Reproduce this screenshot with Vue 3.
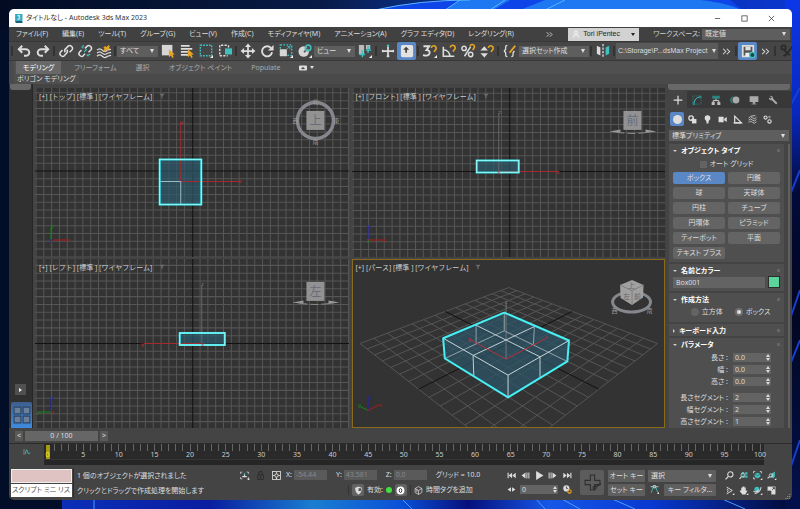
<script setup>
import { ref, h } from "vue";

const T = "#3fc1c0"; // teal accent
const Y = "#e9a522"; // orange accent

const icons = {
  logo: `<rect x="2" y="0" width="13" height="12" fill="#2fa9c4"/><path d="M2 12h13v4H4l-2-2z" fill="#17627a"/><path d="M6 3h4.500l-2 2.500q2.500 0 2.200 2.300q-1 2.600-4.700 1.200" stroke="#fff" stroke-width="1.700" fill="none"/>`,
  undo: `<path d="M6 2L2 6l4 4M2.500 6H10a4 3.700 0 010 7.500H8" stroke-width="2.200"/>`,
  redo: `<path d="M10 2l4 4l-4 4M13.500 6H6a4 3.700 0 000 7.500h2" stroke-width="2.200"/>`,
  link: `<path d="M7 9.500Q5.500 7 8 5l2.500-2.500q2-1.500 4 .3t.2 4L12 9.500M9 6.500q1.500 2.500-.6 4.300L6 13.500q-2 1.500-4-.3t-.2-4L4 7" stroke-width="1.700"/>`,
  unlink: `<path d="M8 5l2.500-2.500q2-1.500 4 .3t.2 4L12 9.500M8 11l-2 2.500q-2 1.500-4-.3t-.2-4L4 7" stroke-width="1.700"/><path d="M4 3l2 2M12 14l-2-2M7 9l3-3M6 1v2M14 12h-2" stroke="${T}" stroke-width="1.500"/>`,
  bind: `<path d="M0 7q3-3 6 0t6 0l4-1M0 10.500q3-3 6 0t6 0l4-1M0 14q3-3 6 0t6 0l4-1" stroke-width="1.400"/><path d="M8 8l6-6M8 5l2-2M11 7l3-3" stroke="${Y}" stroke-width="2.200"/>`,
  selObj: `<rect x="1" y="1" width="12" height="12" fill="#d6d6d6" stroke="none"/><path d="M9 6l7 6h-3l1.500 3l-1.500 1l-1.700-3L9 15z" fill="${Y}" stroke="none"/>`,
  selName: `<path d="M1 2h10M1 5.500h13M1 9h8M1 12.500h9" stroke-width="2"/><path d="M9 6l7 6h-3l1.500 3l-1.500 1l-1.700-3L9 15z" fill="${Y}" stroke="none"/>`,
  region: `<rect x="1.500" y="1.500" width="13" height="12" stroke="${T}" stroke-width="1.600" stroke-dasharray="2 1.300"/><path d="M16 12.500V16h-3.500z" fill="#eee" stroke="none"/>`,
  crossing: `<path d="M10 1.500H2v12h9M12 1.500V4" stroke-width="1.600" stroke-dasharray="2.500 1.500"/><rect x="8" y="5" width="8" height="7" fill="${T}" stroke="none"/>`,
  move: `<path d="M8 2v12M2 8h12" stroke-width="2"/><path d="M8-.500l3.500 4h-7zM8 16.500l3.500-4h-7zM-.500 8l4-3.500v7zM16.500 8l-4-3.500v7z" fill="#ddd" stroke="none"/>`,
  rotate: `<path d="M12.500 4.500a5.800 5.800 0 101.300 5" stroke-width="2.200"/><path d="M15.500 1v6.500H9z" fill="#ddd" stroke="none"/>`,
  scale: `<rect x="1.500" y="1" width="13" height="12" stroke="${T}" stroke-width="1.600" stroke-dasharray="2 1.500"/><rect x="1" y="6" width="8" height="8" fill="#d6d6d6" stroke="none"/><path d="M9 6l3-3M9.500 3h3v3" stroke="${T}"/><path d="M16 12.500V16h-3.500z" fill="#eee" stroke="none"/>`,
  place: `<circle cx="6.500" cy="8.500" r="6" fill="#d6d6d6" stroke="none"/><path d="M7 9.500l4-5" stroke="#555" stroke-width="2"/><circle cx="11.500" cy="4.500" r="3.200" stroke="${T}" stroke-width="1.800"/><path d="M16 12.500V16h-3.500z" fill="#eee" stroke="none"/>`,
  pivot: `<path d="M1 1h6v11H1zM9 1h5v5H9z" fill="#bbb" stroke="none"/><path d="M5 7v8M2 12h6M11.500 2v8M9 7h6" stroke="${T}" stroke-width="1.700"/><path d="M16 12.500V16h-3.500z" fill="#eee" stroke="none"/>`,
  manip: `<path d="M8 1v14M1 8h14" stroke-width="2"/><path d="M6.500 14h3M2 6.500v3M14 6.500v3" stroke-width="1.500"/><circle cx="8" cy="2" r="1.500" fill="${T}" stroke="none"/>`,
  keyb: `<rect x="1" y="1" width="14" height="14" rx="2" fill="#e3e3e3" stroke="none"/><path d="M7 3L10.500 6.500H8V10H6V6.500H3.500z" fill="#444" stroke="none"/>`,
  snap3: `<path d="M.500 2.500H7L4 7q4 0 3.500 3.500Q6.500 14.500 0 12.700" stroke-width="2.200"/><path d="M9.500 4.500a2.800 2.800 0 115 2L12.500 9" stroke="${Y}" stroke-width="1.800"/><path d="M16 12.500V16h-3.500z" fill="#eee" stroke="none"/>`,
  angle: `<path d="M1.500 3v11H14M2 6.500a8 8 0 017 7.500" stroke-width="1.800"/><path d="M9.500 4a2.800 2.800 0 115 2L12.500 8.500" stroke="${Y}" stroke-width="1.800"/>`,
  percent: `<circle cx="3.500" cy="5" r="2.500" stroke-width="1.700"/><circle cx="11" cy="12" r="2.500" stroke-width="1.700"/><path d="M11 3L4 14" stroke-width="1.700"/><path d="M10.500 2.500a2.500 2.500 0 114 2.500L13.500 7" stroke="${Y}" stroke-width="1.800"/>`,
  spin: `<path d="M5 2.500l4 5H.500zM5 15.500l4-5H.500z" fill="#ddd" stroke="none"/><path d="M9.500 4.500a2.800 2.800 0 115 2L12.500 9" stroke="${Y}" stroke-width="1.800"/>`,
  braces: `<path d="M5 1.500q-2 0-2 2V6L1.500 8L3 10v2.500q0 2 2 2M9.500 14.500q2 0 2-2V10L13 8" stroke-width="1.500"/><path d="M7.500 10L14 2" stroke="${Y}" stroke-width="2.200"/>`,
  mirror: `<path d="M1 2l4 2v9l-4-2z" fill="#ddd" stroke="none"/><path d="M15 2l-4 2v9l4-2z" fill="${T}" stroke="none"/><path d="M8 0v16" stroke-dasharray="2.500 1.500" stroke-width="1.500"/>`,
  more: `<path d="M3 4l4 4l-4 4M8.500 4l4 4l-4 4" stroke-width="1.500"/>`,
  save: `<path d="M2 2h12v12H2z" fill="#555" stroke="#ddd" stroke-width="2"/><path d="M5 3h6v4H5z" fill="#ddd" stroke="none"/><path d="M5 10h5v4H5z" fill="#eee" stroke="none"/><circle cx="13" cy="12.500" r="3" fill="#17474a" stroke="${T}" stroke-width="1.500"/>`,
  tools: `<g stroke="#292929" stroke-width="2"><path d="M15 2L7 12l-3 2"/><circle cx="4" cy="4" r="2.500"/><path d="M5 7l6 6"/></g>`,
  user: `<circle cx="8" cy="5" r="3.200" stroke="#fff" stroke-width="1.500"/><path d="M2.500 15q0-5.500 5.500-5.500t5.500 5.500" stroke="#fff" stroke-width="1.500"/>`,
  badge: `<rect y="3" width="16" height="10" rx="2" fill="#ddd" stroke="none"/><path d="M5 9.500l3-3l3 3z" fill="#333" stroke="#333"/>`,
  plus: `<path d="M8 1v14M1 8h14" stroke-width="2"/>`,
  modify: `<rect x="1.500" y="1.500" width="13" height="13" stroke="#2b8583" stroke-dasharray="3 1.500"/><path d="M3 14Q4 4 13 3" stroke="${T}" stroke-width="1.600"/><path d="M1 12h4v4H1zM11 1h4v4h-4z" fill="#2b8583" stroke="none"/>`,
  hierarchy: `<path d="M2 1h12v5H2z" fill="#2b8583" stroke="none"/><path d="M8 6v3M3.500 12V9h9v3" stroke-width="1.500"/><path d="M1 11h5v5H1zM10 11h5v5h-5z" fill="#bbb" stroke="none"/>`,
  motion: `<circle cx="9.500" cy="8" r="5.500" fill="#aaa" stroke="none"/><path d="M5 2.500a6 6 0 000 11M2.500 4a6 6 0 000 8" stroke="#2b8583" stroke-width="1.500"/>`,
  display: `<path d="M1 2h14v9H1zM6 11h4v3H6z" fill="#aaa" stroke="none"/><path d="M4 14.500h8" stroke="#aaa"/>`,
  wrench: `<path d="M6 6l8 8" stroke="#aaa" stroke-width="3"/><path d="M3 1.500L6 4L4 6L1.500 3.500q-.500 3 1.500 4.500t5-1q1-3-1-4.500T3 1.500z" fill="#aaa" stroke="none"/>`,
  sphere: `<circle cx="8" cy="8" r="6.500" fill="#dedede" stroke="none"/>`,
  shapes: `<circle cx="5.500" cy="5.500" r="4" stroke-width="2.200"/><rect x="7" y="7" width="8" height="8" fill="#ddd" stroke="none"/><path d="M5 10l5-5" stroke-width="2.500"/>`,
  light: `<circle cx="8" cy="5.500" r="5" fill="#ddd" stroke="none"/><path d="M5.500 9h5L9.500 15h-3z" fill="#ddd" stroke="none"/>`,
  camera: `<path d="M1 3h9v10H1zM11 6.500l4.500-3v9L11 9.500z" fill="#ddd" stroke="none"/>`,
  helper: `<path d="M3 2v12h12z" stroke-width="2.200"/><path d="M1 14h14" stroke-width="2"/>`,
  waves: `<path d="M1 5q4-4 7 0t7-1M1 9q4-4 7 0t7-1M1 13q4-4 7 0t7-1M5 2l8-1" stroke-width="1.400"/>`,
  gears: `<circle cx="4.500" cy="4.500" r="2.800" stroke-width="2"/><circle cx="11.500" cy="11.500" r="3" stroke-width="2"/><circle cx="11.500" cy="3.500" r="1.500"/>`,
  play: `<path d="M2 0l13 8L2 16z" fill="#ddd" stroke="none"/>`,
  first: `<path d="M2 3v10" stroke-width="2"/><path d="M9 3v10L3 8zM15.500 3v10L9.500 8z" fill="#ddd" stroke="none"/>`,
  last: `<path d="M14 3v10" stroke-width="2"/><path d="M7 3v10l6-5zM.500 3v10l6-5z" fill="#ddd" stroke="none"/>`,
  prev: `<path d="M8 2.500v11L1 8z" fill="#ddd" stroke="none"/><path d="M10.500 2.500v11M14 2.500v11" stroke-width="1.800"/>`,
  next: `<path d="M8 2.500v11L15 8z" fill="#ddd" stroke="none"/><path d="M5.500 2.500v11M2 2.500v11" stroke-width="1.800"/>`,
  keyMode: `<path d="M7 4v8L1 8zM9 4v8l6-4z" fill="#ddd" stroke="none"/>`,
  clock: `<circle cx="6" cy="6" r="5.500" fill="#ddd" stroke="none"/><path d="M6 2.500V6h3" stroke="#444" stroke-width="1.500"/><circle cx="11.500" cy="11.500" r="3" stroke="${Y}" stroke-width="2"/>`,
  bigKey: `<path d="M6 1h4v5h5v4h-5v5H6v-5H1V6h5z" stroke="#2f2f2f" stroke-width="1"/><circle cx="10" cy="13" r="1.500" stroke="#2f2f2f"/><path d="M11 12l5-3" stroke="#2f2f2f" stroke-width="1.500"/>`,
  curve: `<path d="M2 14L6 3h4l4 11" stroke="${T}" stroke-width="1.500"/><path d="M1 3h4M11 3h4M6 1h4v4H6z" stroke-width="1.500"/><path d="M16 12.500V16h-3.500z" fill="#eee" stroke="none"/>`,
  track: `<path d="M2 2v12" stroke="#bbb"/><path d="M5 12q2-14 4-5t5 2" stroke="${T}" stroke-width="1.700"/>`,
  isolate: `<path d="M1 5V2h3M12 2h3v3M15 11v3h-2M4 14H1v-3" stroke-width="1.300"/><path d="M4 11h8V9H9V7H7v2H4z" fill="#ddd" stroke="none"/><circle cx="8" cy="5.500" r="1.600" fill="${T}" stroke="none"/><path d="M16.500 12.500V16H13z" fill="#eee" stroke="none"/>`,
  lock: `<path d="M3 7h10v8H3z" stroke="#292929" stroke-width="1.500"/><path d="M5 7V4q0-3 3-3t3 3v3M8 9v4" stroke="#292929" stroke-width="1.800"/>`,
  absolute: `<rect x="1" y="1" width="14" height="14" stroke-width="1.500"/><circle cx="8" cy="8" r="3" stroke-width="1.700"/><path d="M8 2v3M8 11v3M2 8h3M11 8h3" stroke-width="2"/>`,
  shield: `<path d="M8 1q3 2 6 2q0 9-6 12Q2 12 2 3q3 0 6-2z" fill="#ddd" stroke="none"/><path d="M8 4v5h4q1-2 1-5z" fill="#555" stroke="none"/>`,
  zero: `<circle cx="8" cy="8" r="7" fill="#fff" stroke="none"/><ellipse cx="8" cy="8" rx="2.200" ry="3.500" stroke="#333" stroke-width="1.700"/>`,
  cube: `<path d="M8 1l6 3.500v7L8 15l-6-3.500v-7zM2 4.500L8 8l6-3.500M8 8v7M5 6v5" stroke-width="1.300"/>`,
  zoom: `<circle cx="9.500" cy="6" r="4.700" stroke-width="1.800"/><path d="M6 9.500L1 15" stroke-width="2.200"/>`,
  zoomAll: `<path d="M5 2h4v4H5zM11 2h4v4h-4zM11 8h4v4h-4zM6 8h4v4H6z" fill="${T}" stroke="none"/><circle cx="7" cy="7" r="3.500" stroke-width="1.300"/><path d="M4.500 10L1 14" stroke-width="2"/>`,
  extents: `<path d="M1 4V1h3M12 1h3v3M4 14H1v-3" stroke-width="1.500"/><path d="M8 3l5 2.500v5L8 13l-5-2.500v-5z" fill="${T}" stroke="none"/><path d="M3.500 6L8 8l4.500-2" stroke="#235c5c"/><path d="M16.500 12.500V16H13z" fill="#eee" stroke="none"/>`,
  extAll: `<path d="M9 4l5-3v9l-3 3l-5-3z" fill="${T}" stroke="none"/><circle cx="7" cy="8" r="3" stroke-width="1.500"/><path d="M5 10l-4 3" stroke-width="2"/><path d="M16.500 12.500V16H13z" fill="#eee" stroke="none"/>`,
  fov: `<path d="M3 2l10 6L3 14M4 5q3 3 0 6" stroke-width="1.700"/><path d="M16.500 12.500V16H13z" fill="#eee" stroke="none"/>`,
  hand: `<path d="M4 8V3h1.800v4V1.500h2V7V1h2v6l.200-4.500h2V9l2-1.500l.800 1L11.500 15H6L1 9l1.500-1z" fill="#ddd" stroke="none"/><path d="M16.500 12.500V16H13z" fill="#eee" stroke="none"/>`,
  orbit: `<circle cx="7" cy="6" r="4.500" fill="${T}" stroke="none"/><path d="M3 14Q15 10 14 2M1 9q4 4 9-2" stroke-width="1.800"/><path d="M16.500 12.500V16H13z" fill="#eee" stroke="none"/>`,
  maxView: `<rect x="1" y="1" width="14" height="14" fill="#ddd" stroke="none"/><path d="M1 9h6v6H1zM10 3h3v3M13 3L9 7" fill="#444" stroke="#444" stroke-width="1.500"/>`,
  funnel: `<path d="M1 2h14L9.500 8v6h-3V8z" fill="#6c6c6c" stroke="none"/>`,
  grip: `<path d="M15 3v2M15 8v2M15 13v2M10 8v2M10 13v2M5 13v2" stroke-width="2"/>`,
  min: `<path d="M2 8h12" stroke="#222" stroke-width="1.500"/>`,
  max: `<rect x="2" y="2" width="12" height="12" stroke="#222" stroke-width="1.500"/>`,
  close: `<path d="M2 2l12 12M14 2L2 14" stroke="#222" stroke-width="1.500"/>`,
  layout: `<path d="M1 1h6v6H1zM9 1h6v6H9zM1 9h6v6H1zM9 9h6v6H9z" fill="#6b7f99" stroke="#2c4668"/>`,
};

const Icon = (props) =>
  h("svg", {
    class: "icon",
    viewBox: "0 0 16 16",
    "aria-hidden": "true",
    innerHTML: icons[props.name],
  });
Icon.props = ["name"];

const menus = ["ファイル(F)", "編集(E)", "ツール(T)", "グループ(G)", "ビュー(V)", "作成(C)", "モディファイヤ(M)", "アニメーション(A)", "グラフ エディタ(D)", "レンダリング(R)"];

const tools = [
  "|", "undo", "redo", "|", "link", "unlink", "bind", "|",
  { label: "選択フィルタ", value: "すべて", cls: "w40" },
  "selObj", "selName", "region", "crossing", "|", "move", "rotate", "scale", "place",
  { label: "参照座標系", value: "ビュー", cls: "w40" },
  "pivot", "|", "manip", "keyb", "|", "snap3", "angle", "percent", "spin", "|", "braces",
  { label: "選択セット", value: "選択セット作成", cls: "w70" },
  "|", "mirror", "|",
  { label: "プロジェクト", value: "C:\\Storage\\P...dsMax Project", cls: "project" },
  "more", "|", "save", "more", "|", "tools",
];
const pressed = ["keyb", "save"];

const ribbon = ["モデリング", "フリーフォーム", "選択", "オブジェクト ペイント", "Populate"];

const P = 7.8; // grid pitch
const gridLines = (cx, cy) => {
  let d = "";
  for (let i = -21; i <= 21; i++) {
    if (i) d += `M${(cx + i * P).toFixed(1)} 0V172M0 ${(cy + i * P).toFixed(1)}H316`;
  }
  return d;
};

// ground plane of the perspective view, u and v run from -1 to 1
const project = (u, v) => {
  const s = (u + v) / 2;
  const t = (v - u) / 2;
  const w = 1 - 0.349 * s;
  return `${(157 + (149 * t) / w).toFixed(1)} ${(85 + (75.5 * s) / w).toFixed(1)}`;
};
const ground = () => {
  let d = "";
  for (let i = -7; i <= 7; i++) {
    if (i) d += `M${project(i / 7, -1)}L${project(i / 7, 1)}M${project(-1, i / 7)}L${project(1, i / 7)}`;
  }
  return d;
};
const groundAxes = `M${project(0, -1)}L${project(0, 1)}M${project(-1, 0)}L${project(1, 0)}`;

const views = [
  {
    name: "トップ", cy: 83, face: "上", ring: true,
    box: [124.5, 71.5, 41.5, 45], inner: "M125 93.500h20.500V116",
    red: "M145.500 34V93.500H204", gray: "",
    marks: [["y", 145, 36, "red"], ["x", 203, 95, "red"]],
    tri: [["M16 152V139", "#118a11"], ["M16 152H33", "#b01818"]],
    triMarks: [["y", 16, 140, "#118a11"], ["z", 15, 154, "#2222cc"], ["x", 31, 154, "#b01818"]],
  },
  {
    name: "フロント", cy: 83.5, face: "前",
    box: [124.5, 72.5, 42, 12], inner: "",
    red: "M147 83.500H206", gray: "M146.500 25V83",
    marks: [["z", 146, 26, "#777"], ["x", 204, 86, "red"], ["x", 145, 86, "red"]],
    tri: [["M16 152V138", "#2222bb"], ["M16 152H33", "#b01818"]],
    triMarks: [["z", 16, 140, "#2222cc"], ["y", 15, 154, "#118a11"], ["x", 31, 154, "#b01818"]],
  },
  {
    name: "レフト", cy: 84.5, face: "左",
    box: [144.5, 74, 45, 12], inner: "",
    red: "M109 84.500H166", gray: "M166.500 26V84",
    marks: [["z", 166, 27, "#777"], ["y", 106, 87, "red"], ["x", 166, 87, "red"]],
    tri: [["M16 153V139", "#2222bb"], ["M4 153H16", "#118a11"]],
    triMarks: [["z", 16, 141, "#2222cc"], ["y", 2, 155, "#118a11"], ["x", 16, 155, "#b01818"]],
  },
  { name: "パース", persp: true },
];

const panelTabs = ["plus", "modify", "hierarchy", "motion", "display", "wrench"];
const categories = ["sphere", "shapes", "light", "camera", "helper", "waves", "gears"];
const objects = ["ボックス", "円錐", "球", "天球体", "円柱", "チューブ", "円環体", "ピラミッド", "ティーポット", "平面", "テキスト プラス"];
const current = ref("ボックス");

const params = [
  { id: "len", label: "長さ :", value: "0.0" },
  { id: "wid", label: "幅 :", value: "0.0" },
  { id: "hei", label: "高さ :", value: "0.0" },
  { id: "ls", label: "長さセグメント :", value: "2", gap: true },
  { id: "ws", label: "幅セグメント :", value: "2" },
  { id: "hs", label: "高さセグメント :", value: "1" },
];

const ticks = Array.from({ length: 101 }, (_, i) => i);
const coords = [
  { axis: "X:", value: "-54.44" },
  { axis: "Y:", value: "43.581" },
  { axis: "Z:", value: "0.0" },
];
const nav = ["zoom", "zoomAll", "extents", "extAll", "fov", "hand", "orbit", "maxView"];
</script>

<template>
  <div class="desktop">
    <svg class="wallpaper" viewBox="0 0 800 509" preserveAspectRatio="none" aria-hidden="true">
      <defs>
        <linearGradient id="top"><stop offset="0" stop-color="#020b22" /><stop offset=".4" stop-color="#071b46" /><stop offset=".5" stop-color="#0a2a78" /><stop offset="1" stop-color="#0a37d0" /></linearGradient>
        <linearGradient id="low"><stop offset="0" stop-color="#0b2fb8" /><stop offset=".2" stop-color="#0a1da0" /><stop offset=".34" stop-color="#1a7ed0" /><stop offset=".46" stop-color="#0a50d8" /><stop offset=".55" stop-color="#06107c" /><stop offset=".66" stop-color="#1657e8" /><stop offset=".8" stop-color="#0838d0" /><stop offset="1" stop-color="#020830" /></linearGradient>
        <linearGradient id="side" x2="0" y2="1"><stop offset="0" stop-color="#0b38e8" /><stop offset=".22" stop-color="#0828c0" /><stop offset=".38" stop-color="#020a3a" /><stop offset=".6" stop-color="#010720" /><stop offset="1" stop-color="#04104c" /></linearGradient>
      </defs>
      <rect width="800" height="509" fill="#020d28" />
      <rect width="800" height="30" fill="url(#top)" />
      <path d="M375 10Q420 0 470 0H730L745 12H375z" fill="#0d45e8" />
      <path d="M445 10L460 0H510L490 12zM520 10L545 0H700Q730 3 745 12z" fill="#1e78f2" />
      <path d="M375 10Q420 0 470 0M445 10L460 0M490 10L505 0M545 10L565 0" stroke="#59b4ff" fill="none" />
      <rect x="62" y="496" width="738" height="13" fill="url(#low)" />
      <rect x="785" width="15" height="509" fill="url(#side)" />
      <path d="M788 110L800 88M788 200L800 170M788 325L800 290M788 370L800 340M788 475L800 440" stroke="#1640d0" stroke-width="2" />
      <path d="M94 497V509M400 497L412 509M535 498L545 509M560 498L580 509M610 498L635 509M720 498L745 509" stroke="#4a9cff" stroke-width="1" />
    </svg>

    <div class="window">
      <header class="titlebar">
        <Icon name="logo" />
        <h1>タイトルなし - Autodesk 3ds Max 2023</h1>
        <button aria-label="最小化"><Icon name="min" /></button>
        <button aria-label="最大化"><Icon name="max" /></button>
        <button aria-label="閉じる"><Icon name="close" /></button>
      </header>

      <nav class="menubar">
        <button v-for="m in menus" :key="m">{{ m }}</button>
        <button class="menu-more" aria-label="その他"><Icon name="more" /></button>
        <button class="account"><Icon name="user" />Tori iPentec<i class="caret"></i></button>
        <label for="workspace">ワークスペース:</label>
        <select id="workspace"><option>既定値</option></select>
      </nav>

      <div class="toolbar">
        <template v-for="(t, i) in tools" :key="i">
          <span v-if="t === '|'" class="sep"></span>
          <select v-else-if="t.value" :aria-label="t.label" :class="t.cls"><option>{{ t.value }}</option></select>
          <button v-else :aria-label="t" :class="{ on: pressed.includes(t), narrow: t === 'more' }"><Icon :name="t" /></button>
        </template>
      </div>

      <div class="ribbon">
        <div class="ribbon-tabs">
          <button v-for="(r, i) in ribbon" :key="r" :class="{ active: i === 0 }">{{ r }}</button>
          <button class="ribbon-min" aria-label="リボン表示"><Icon name="badge" /><i class="caret"></i></button>
        </div>
        <button class="ribbon-panel">ポリゴン モデリング</button>
      </div>

      <main class="main">
        <aside class="strip">
          <span class="strip-head"></span>
          <button class="expand" aria-label="展開"></button>
          <button class="layout" aria-label="ビューポート レイアウト"><Icon name="layout" /></button>
        </aside>

        <section class="viewports">
          <div v-for="v in views" :key="v.name" class="view" :class="{ active: v.persp }">
            <svg v-if="!v.persp" class="scene" viewBox="0 0 313 169" preserveAspectRatio="xMidYMid slice">
              <path :d="gridLines(157, v.cy)" stroke="#565656" />
              <path :d="`M157.500 0V172M0 ${v.cy}H316`" stroke="#121212" />
              <rect :x="v.box[0]" :y="v.box[1]" :width="v.box[2]" :height="v.box[3]" fill="#2c5a6c" fill-opacity=".7" />
              <path :d="v.gray" stroke="#666" />
              <path :d="v.red" stroke="#a52a2e" />
              <path :d="v.inner" stroke="#9db8c2" />
              <rect :x="v.box[0]" :y="v.box[1]" :width="v.box[2]" :height="v.box[3]" stroke="#3fe6ec" stroke-width="2" />
              <rect :x="v.box[0]" :y="v.box[1]" :width="v.box[2]" :height="v.box[3]" stroke="#b5ffff" stroke-width=".6" />
              <text v-for="(m, i) in v.marks" :key="i" :x="m[1]" :y="m[2]" :fill="m[3] === 'red' ? '#c22a30' : m[3]">{{ m[0] }}</text>
              <path v-for="t in v.tri" :key="t[0]" :d="t[0]" :stroke="t[1]" />
              <text v-for="m in v.triMarks" :key="m[0]" :x="m[1]" :y="m[2]" :fill="m[3]">{{ m[0] }}</text>
              <g v-if="v.ring">
                <circle cx="280" cy="32.500" r="18" stroke="#85878c" stroke-width="3.500" />
                <text class="compass" x="280" y="16">北</text>
                <text class="compass" x="260" y="35">西</text>
                <text class="compass" x="301" y="35">東</text>
                <text class="compass" x="280" y="56">南</text>
              </g>
              <g v-else>
                <path d="M257 43.500L268 41.500V45zM304 43.500L293 41.500V45z" fill="#999" />
                <path d="M264 44Q280 47 297 44" stroke="#888" stroke-dasharray="8 3" />
              </g>
              <rect x="271" y="23" width="18" height="19" fill="#929292" />
              <text class="face" x="280" y="37">{{ v.face }}</text>
            </svg>

            <svg v-else class="scene" viewBox="0 0 314 170" preserveAspectRatio="xMidYMid slice">
              <path :d="ground()" stroke="#555" />
              <path :d="groundAxes" stroke="#111" />
              <path d="M152.500 54L91.300 79.700L93 100L156.300 139L215.700 103L217.300 82z" fill="#2b5568" fill-opacity=".72" />
              <path d="M154.300 44V100.700" stroke="#71777b" />
              <path d="M93 100L152.500 72.300L215.700 103M152.500 54V72.300M124.300 66.700V85.500M182.700 68L181.700 85.500" stroke="#8fa3ac" />
              <path d="M124.300 66.700L188.300 98.300V118.500M182.700 68L121.300 97L122 117.500" stroke="#c0ced4" />
              <path d="M91.300 79.700L156.300 116.700L217.300 82M156.300 116.700V139" stroke="#c9d6da" />
              <path d="M118 81L154.300 100.700L194 80" stroke="#b3323d" />
              <path d="M152.500 54L91.300 79.700L93 100L156.300 139L215.700 103L217.300 82z" stroke="#46f0f4" stroke-width="2" stroke-linejoin="round" />
              <text x="116" y="83" fill="#c22a30">y</text>
              <text x="193" y="81" fill="#c22a30">x</text>
              <text x="153" y="45" fill="#777">z</text>
              <path d="M16 152V139" stroke="#2222bb" />
              <path d="M16 152L28 146" stroke="#b01818" />
              <path d="M16 152L8 148" stroke="#118a11" />
              <text x="16" y="141" fill="#2222cc">z</text>
              <text x="27" y="149" fill="#b01818">x</text>
              <text x="6" y="149" fill="#118a11">y</text>
              <ellipse cx="280" cy="43.500" rx="19" ry="10" stroke="#85878c" stroke-width="3" />
              <path d="M280.500 21.500L292 26.500L291.500 39L280.500 46.500L269 39.500L268.500 26.500z" fill="#a0a0a0" />
              <path d="M268.500 26.500L280.500 32L292 26.500M280.500 32V46.500" stroke="#7d7d7d" />
              <text class="mini" x="280" y="29">上</text>
              <text class="mini" x="275" y="40">左</text>
              <text class="mini" x="286" y="40">前</text>
              <text class="compass" x="263" y="54">西</text>
              <text class="compass" x="298" y="54">南</text>
            </svg>
            <p class="view-label">[+] [{{ v.name }}] [標準 ] [ワイヤフレーム] <Icon name="funnel" /></p>
          </div>
        </section>

        <aside class="panel">
          <span class="strip-head"></span>
          <div class="panel-tabs">
            <button v-for="(t, i) in panelTabs" :key="t" :aria-label="t" :class="{ active: i === 0 }"><Icon :name="t" /></button>
          </div>
          <div class="cats">
            <button v-for="(c, i) in categories" :key="c" :aria-label="c" :class="{ on: i === 0 }"><Icon :name="c" /></button>
          </div>
          <select class="prim" aria-label="カテゴリ"><option>標準プリミティブ</option></select>
          <div class="rollouts">
            <section class="rollout">
              <h2>オブジェクト タイプ</h2>
              <label class="auto"><input type="checkbox" />オート グリッド</label>
              <div class="objects">
                <button v-for="o in objects" :key="o" :class="{ on: o === current }" @click="current = o">{{ o }}</button>
              </div>
            </section>
            <section class="rollout">
              <h2>名前とカラー</h2>
              <div class="name-row">
                <input type="text" value="Box001" aria-label="名前" />
                <button class="swatch" aria-label="カラー"></button>
              </div>
            </section>
            <section class="rollout">
              <h2>作成方法</h2>
              <div class="radios">
                <label><input type="radio" name="method" />立方体</label>
                <label><input type="radio" name="method" checked />ボックス</label>
              </div>
            </section>
            <section class="rollout closed">
              <h2>キーボード入力</h2>
            </section>
            <section class="rollout last">
              <h2>パラメータ</h2>
              <div v-for="p in params" :key="p.id" class="param" :class="{ gap: p.gap }">
                <label :for="p.id">{{ p.label }}</label>
                <input :id="p.id" class="spinner" type="text" :value="p.value" />
              </div>
            </section>
          </div>
        </aside>
      </main>

      <div class="slider">
        <button aria-label="前のフレーム">&lt;</button>
        <button class="thumb">0 / 100</button>
        <button aria-label="次のフレーム">&gt;</button>
      </div>

      <div class="timeline">
        <button class="curve-btn" aria-label="カーブ エディタ"><Icon name="track" /></button>
        <div class="track">
          <span v-for="t in ticks" :key="t" class="tick" :class="{ now: t === 0 }"><b v-if="t % 5 === 0">{{ t }}</b></span>
        </div>
      </div>

      <footer class="status">
        <div class="script">
          <input type="text" aria-label="マクロ レコーダ" />
          <input type="text" aria-label="スクリプト" value="スクリプト ミニ リス" />
        </div>
        <div class="messages">
          <p>1 個のオブジェクトが選択されました</p>
          <p>クリックとドラッグで作成処理を開始します</p>
        </div>
        <div class="info">
          <div class="info-row">
            <button aria-label="選択を分離"><Icon name="isolate" /></button>
            <button aria-label="ロック"><Icon name="lock" /></button>
            <button aria-label="絶対モード"><Icon name="absolute" /></button>
            <label v-for="c in coords" :key="c.axis">{{ c.axis }}<input type="text" :value="c.value" /></label>
            <span>グリッド = 10.0</span>
          </div>
          <div class="info-row second">
            <i class="sep"></i>
            <button class="raised" aria-label="セキュリティ"><Icon name="shield" /></button>
            <span>有効:</span>
            <i class="dot"></i>
            <button class="raised" aria-label="0"><Icon name="zero" /></button>
            <i class="sep"></i>
            <Icon name="cube" />
            <span>時間タグを追加</span>
          </div>
        </div>
        <div class="playback">
          <button v-for="b in ['first', 'prev', 'play', 'next', 'last']" :key="b" :aria-label="b"><Icon :name="b" /></button>
          <button aria-label="キー モード"><Icon name="keyMode" /></button>
          <input class="spinner frame" type="text" value="0" aria-label="フレーム" />
          <button aria-label="時間設定"><Icon name="clock" /></button>
        </div>
        <button class="big-key" aria-label="キーを設定"><Icon name="bigKey" /></button>
        <div class="keys">
          <button>オート キー</button>
          <select aria-label="選択"><option>選択</option></select>
          <button>セット キー</button>
          <div class="filter-row">
            <Icon name="curve" />
            <button>キー フィルタ...</button>
          </div>
        </div>
        <div class="nav">
          <button v-for="n in nav" :key="n" :aria-label="n"><Icon :name="n" /></button>
        </div>
        <Icon class="grip" name="grip" />
      </footer>
    </div>
  </div>
</template>

<style>
body {
  margin: 0;
  background: #020d28;
}
</style>

<style scoped>
.desktop {
  position: relative;
  box-sizing: border-box;
  height: 100vh;
  min-height: 480px;
  padding: 9px 8px 9px 9px;
  display: flex;
  font: 7px/10px "Noto Sans", "Noto Sans CJK JP", sans-serif;
  font-feature-settings: "palt";
  color: #dedede;
}
.desktop *,
.desktop *::before,
.desktop *::after {
  box-sizing: border-box;
}
.wallpaper {
  position: absolute;
  inset: 0;
  width: 100%;
  height: 100%;
}
.window {
  position: relative;
  flex: 1;
  min-width: 0;
  display: flex;
  flex-direction: column;
  border-radius: 5px;
  overflow: hidden;
  background: #444;
}
button,
select,
input {
  font: inherit;
  font-feature-settings: inherit;
  color: inherit;
  margin: 0;
  padding: 0;
  border: 0;
  border-radius: 0;
  background: none;
  min-width: 0;
}
button {
  display: flex;
  align-items: center;
  justify-content: center;
  white-space: nowrap;
}
h1,
h2,
p {
  margin: 0;
  font-size: 7px;
  font-weight: normal;
}
select {
  appearance: none;
  height: 11px;
  padding: 0 10px 0 3px;
  background: #5e5e5e url('data:image/svg+xml,<svg xmlns="http://www.w3.org/2000/svg" width="4" height="4"><path d="M0 0h4L2 4z" fill="%23ddd"/></svg>') no-repeat right 4px center;
}
.icon {
  width: 14px;
  height: 14px;
  flex: none;
  fill: none;
  stroke: #ddd;
  overflow: visible;
}
.caret {
  border: 2px solid transparent;
  border-top: 3px solid currentColor;
  border-bottom: 0;
}

.titlebar {
  height: 18px;
  flex: none;
  display: flex;
  align-items: center;
  padding: 0 9px 0 5px;
  gap: 3px;
  background: #fff;
  color: #333;
}
.titlebar > .icon {
  width: 9px;
  height: 9px;
  stroke: none;
}
.titlebar h1 {
  flex: 1;
}
.titlebar button {
  width: 24px;
}
.titlebar button .icon {
  width: 7px;
  height: 7px;
}

.menubar {
  height: 14px;
  flex: none;
  display: flex;
  align-items: center;
  gap: 14px;
  padding-left: 7px;
  background: #414141;
}
.menubar label {
  color: #ccc;
}
.menubar select {
  width: 88px;
  margin: 0 2px 0 -12px;
}
.menu-more {
  margin-left: auto;
}
.menu-more .icon {
  width: 9px;
  height: 9px;
}
.account {
  width: 71px;
  height: 13px;
  gap: 3px;
  background: #d2d2d2;
  color: #222;
  font-family: "Liberation Sans", sans-serif;
}
.account .icon {
  width: 8px;
  height: 8px;
}
.account .caret {
  margin-left: 8px;
}

.toolbar {
  height: 19px;
  flex: none;
  display: flex;
  align-items: center;
  padding-left: 1px;
  background: #464646;
  border-top: 1px solid #383838;
}
.toolbar button {
  width: 19px;
  height: 18px;
  flex: none;
}
.toolbar button.narrow {
  width: 16px;
}
.toolbar button.narrow .icon {
  width: 11px;
  height: 11px;
}
.toolbar select {
  flex: none;
}
.w40 {
  width: 41px;
}
.w70 {
  width: 70px;
}
.toolbar .project {
  width: 102px;
  height: 16px;
  padding: 0 6px 0 2px;
  background-color: #5a5a5a;
  background-position: right 2px center;
  font-family: "Liberation Sans", sans-serif;
}
.sep {
  width: 2px;
  height: 10px;
  margin: 0 1px;
  flex: none;
  background: #333;
}
button.on {
  background: #5a87c5;
  border-radius: 2px;
}

.ribbon {
  flex: none;
  background: #4a4a4a;
  padding-left: 5px;
  border-top: 1px solid #383838;
}
.ribbon-tabs {
  height: 13px;
  display: flex;
  gap: 7px;
  background: #505050;
}
.ribbon-tabs button {
  padding: 0 6px;
  color: #aaa;
}
.ribbon-tabs .active {
  width: 45px;
  margin-left: 2px;
  color: #fff;
  background: #686868;
}
.ribbon-tabs .ribbon-min {
  gap: 3px;
  color: #ddd;
}
.ribbon-min .icon {
  width: 8px;
  height: 8px;
}
.ribbon-panel {
  height: 10px;
  padding: 0 3px;
  background: #4f4f4f;
}

.main {
  flex: 1;
  min-height: 0;
  display: flex;
  padding-bottom: 1px;
}
.strip {
  width: 24px;
  flex: none;
  display: flex;
  flex-direction: column;
  gap: 7px;
  background: #303030;
  border-right: 1px solid #272727;
}
.strip-head {
  height: 6px;
  flex: none;
  margin: 0 1px auto;
  border-radius: 0 0 3px 3px;
  background: #686868;
}
.expand {
  width: 11px;
  height: 11px;
  margin-left: 6px;
  background: #505050;
}
.expand::after {
  content: "";
  border: 2px solid transparent;
  border-left: 3px solid #eee;
  border-right: 0;
}
.layout {
  width: 21px;
  height: 26px;
  margin-left: 2px;
  border-radius: 2px 2px 0 0;
  background: linear-gradient(#3e5f8c, #3f8be0);
}
.layout .icon {
  width: 18px;
  height: 18px;
}
.viewports {
  flex: 1;
  min-width: 0;
  display: grid;
  grid-template: 1fr 1fr / 1fr 1fr;
  gap: 2px 3px;
  padding: 4px 3px 0 2px;
}
.view {
  position: relative;
  overflow: hidden;
  background: #333;
  padding: 4px;
}
.view.active::after {
  content: "";
  position: absolute;
  inset: 0;
  border: 1px solid #8a6a1c;
}
.scene {
  position: absolute;
  inset: 0;
  width: 100%;
  height: 100%;
  fill: none;
}
.scene text {
  font-size: 6px;
}
.scene .face {
  font-size: 12px;
  fill: #686c78;
  text-anchor: middle;
}
.scene .mini {
  font-size: 7px;
  fill: #62666e;
  text-anchor: middle;
}
.scene .compass {
  font-size: 6px;
  fill: #9a9a9a;
  text-anchor: middle;
}
.view-label {
  position: relative;
  color: #ccc;
  font-feature-settings: normal;
}
.view-label .icon {
  width: 6px;
  height: 6px;
  margin-left: 5px;
}

.panel {
  width: 124px;
  flex: none;
  display: flex;
  flex-direction: column;
}
.panel .strip-head {
  margin: 0 2px 1px 0;
}
.panel-tabs {
  height: 17px;
  flex: none;
  display: flex;
  background: #383838;
}
.panel-tabs button {
  width: 19px;
}
.panel-tabs .active {
  background: #444;
}
.panel-tabs .icon {
  width: 10px;
  height: 10px;
}
.cats {
  height: 22px;
  flex: none;
  display: flex;
  align-items: center;
  padding-left: 2px;
  gap: 1px;
}
.cats button {
  width: 14px;
  height: 14px;
}
.cats .icon {
  width: 9px;
  height: 9px;
}
.cats .on .icon {
  width: 11px;
  height: 11px;
}
.prim {
  flex: none;
  margin: 0 3px 3px 1px;
}
.rollouts {
  flex: 1;
  min-height: 0;
  overflow: hidden;
  display: flex;
  flex-direction: column;
  gap: 2px;
  margin: 0 2px 0 1px;
  padding-right: 4px;
  border-right: 2px solid #606060;
}
.rollout {
  flex: none;
  padding: 1px 4px 3px;
  background: #4f4f4f;
}
.rollout h2 {
  display: flex;
  align-items: center;
  gap: 4px;
  line-height: 11px;
  font-weight: bold;
  color: #fff;
}
.rollout h2::before {
  content: "";
  border: 2px solid transparent;
  border-top: 2px solid #ccc;
  border-bottom: 0;
}
.rollout.closed,
.rollout.last {
  padding-bottom: 0;
}
.rollout.last {
  flex: 1;
}
.rollout.closed h2::before {
  border: 2px solid transparent;
  border-left: 2px solid #ccc;
  border-right: 0;
}
.rollout h2::after {
  content: "";
  width: 3px;
  height: 3px;
  margin-left: auto;
  background: #666;
}
.auto {
  height: 16px;
  display: flex;
  align-items: center;
  justify-content: center;
  gap: 3px;
}
.auto input {
  appearance: none;
  width: 7px;
  height: 7px;
  background: #636363;
}
.objects {
  display: grid;
  grid-template-columns: 1fr 1fr;
  gap: 3px;
}
.objects button {
  height: 12px;
  border-radius: 2px;
  background: #646464;
}
.objects .on {
  background: #5a87c5;
}
.name-row {
  display: flex;
  gap: 3px;
  align-items: center;
}
.name-row input {
  flex: 1;
  height: 11px;
  padding: 0 3px;
  background: #636363;
}
.swatch {
  width: 12px;
  height: 12px;
  background: #5bd49b;
  border: 1px solid #2c2c2c;
}
.radios {
  height: 14px;
  display: flex;
  align-items: center;
  justify-content: center;
  gap: 12px;
  padding-left: 8px;
}
.radios label {
  display: flex;
  align-items: center;
  gap: 3px;
}
.radios input {
  appearance: none;
  width: 8px;
  height: 8px;
  border-radius: 50%;
  background: #646464;
}
.radios input:checked {
  background: #e0e0e0;
  border: 2px solid #707070;
}
.param {
  display: flex;
  align-items: center;
  justify-content: flex-end;
  gap: 2px;
  height: 9px;
  margin: 3px 9px 0 0;
}
.param.gap {
  margin-top: 7px;
}
.spinner {
  width: 38px;
  height: 9px;
  padding-left: 2px;
  background: #636363 url('data:image/svg+xml,<svg xmlns="http://www.w3.org/2000/svg" width="4" height="7"><path d="M0 3h4L2 0zM0 4h4L2 7z" fill="%23ddd"/></svg>') no-repeat right 1px center;
}
.param label {
  padding-right: 3px;
}

.slider {
  height: 14px;
  flex: none;
  display: flex;
  align-items: center;
  gap: 2px;
  padding-left: 6px;
}
.slider button {
  width: 8px;
  height: 10px;
  background: #595959;
}
.slider .thumb {
  width: 73px;
  background: #666;
}
.timeline {
  height: 22px;
  flex: none;
  display: flex;
  padding-right: 28px;
  border-top: 1px solid #2b2b2b;
}
.curve-btn {
  width: 35px;
  height: 16px;
  flex: none;
}
.curve-btn .icon {
  width: 8px;
  height: 8px;
}
.track {
  flex: 1;
  min-width: 0;
  display: flex;
  background: linear-gradient(#2a2a2a 15px, #353535 15px, #353535 16px, #262626 16px);
}
.tick {
  flex: 1;
  display: flex;
  justify-content: center;
  height: 15px;
  background: linear-gradient(#666, #666) no-repeat center top / 1px 7px;
}
.tick b {
  width: 0;
  display: flex;
  justify-content: center;
  padding-top: 6px;
  font-weight: normal;
  color: #ccc;
}
.tick.now {
  background: linear-gradient(#a89a18, #a89a18) no-repeat center / 4px 14px;
}
.tick.now b {
  color: #ffee30;
}

.status {
  height: 35px;
  flex: none;
  display: flex;
  align-items: center;
  padding: 0 2px;
}
.script {
  width: 61px;
  height: 28px;
  display: grid;
  gap: 1px;
  flex: none;
}
.script input {
  width: 61px;
  background: #fff;
  color: #555;
  padding: 0 1px;
}
.script input:first-child {
  background: #dfc3c3;
  border: 1px solid #eee;
}
.messages {
  width: 163px;
  flex: none;
  padding-left: 3px;
  margin-left: 1px;
  border-left: 1px solid #2e2e2e;
  white-space: nowrap;
}
.messages p {
  line-height: 15px;
}
.info {
  width: 250px;
  flex: none;
}
.info-row {
  height: 15px;
  display: flex;
  align-items: center;
  white-space: nowrap;
}
.info-row button {
  width: 16px;
}
.info-row .icon {
  width: 9px;
  height: 9px;
}
.info-row label {
  display: flex;
  align-items: center;
  gap: 2px;
  margin-right: 9px;
}
.info-row label:first-of-type {
  margin-left: 2px;
}
.info-row label input {
  width: 33px;
  height: 10px;
  padding-left: 2px;
  background: #5a5a5a;
  color: #888;
}
.info-row.second {
  gap: 3px;
  padding-left: 112px;
}
.info-row.second .sep {
  margin: 0;
  width: 1px;
}
.info-row .raised {
  width: 12px;
  height: 12px;
  border-radius: 2px;
  background: #636363;
}
.dot {
  width: 6px;
  height: 6px;
  border-radius: 50%;
  background: #3fe03f;
}
.playback {
  flex: none;
  margin-left: auto;
  display: grid;
  grid-template-columns: 16px 13px 14px 13px 16px;
  row-gap: 2px;
  justify-items: center;
  align-items: center;
}
.playback button {
  height: 12px;
}
.playback .icon {
  width: 9px;
  height: 9px;
}
.playback .frame {
  grid-column: 2 / 5;
}
.big-key {
  width: 24px;
  height: 25px;
  margin: 0 4px 0 5px;
  flex: none;
  border-radius: 2px;
  background: #5c5c5c;
}
.big-key .icon {
  width: 17px;
  height: 17px;
}
.keys {
  display: grid;
  grid-template-columns: 37px 68px;
  gap: 2px 3px;
  flex: none;
}
.keys button,
.keys select {
  height: 12px;
  background-color: #5f5f5f;
  border-radius: 1px;
}
.filter-row {
  display: flex;
  align-items: center;
  gap: 5px;
  padding-left: 2px;
}
.filter-row .icon {
  width: 9px;
  height: 9px;
}
.filter-row button {
  flex: 1;
}
.nav {
  display: grid;
  grid-template-columns: repeat(4, 14px);
  row-gap: 3px;
  margin: 0 6px;
  flex: none;
}
.nav button {
  height: 12px;
}
.nav .icon {
  width: 9px;
  height: 9px;
}
.grip {
  width: 6px;
  height: 6px;
  align-self: flex-end;
  margin-bottom: 1px;
}
</style>
